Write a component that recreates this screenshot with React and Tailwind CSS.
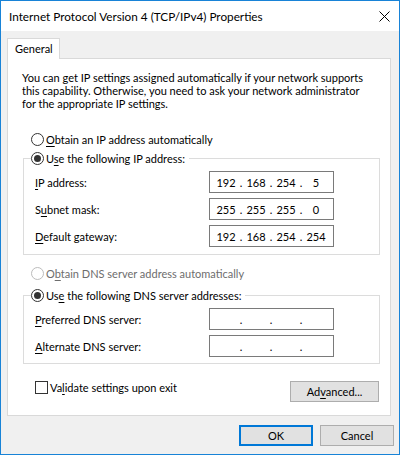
import React from 'react'

// Windows 10 style "Internet Protocol Version 4 (TCP/IPv4) Properties" dialog

function Radio({ checked, disabled }) {
    return (
        <span className={`flex items-center justify-center w-[13px] h-[13px] rounded-full border bg-white shrink-0 ${disabled ? 'border-[#bcbcbc]' : 'border-[#333333]'}`}>
            {checked && <span className="w-[7px] h-[7px] rounded-full bg-[#333333]" />}
        </span>
    )
}

// access-key underline helper
function Key({ children }) {
    return <span className="underline underline-offset-[2px]">{children}</span>
}

function IpBox({ octets }) {
    return (
        <div className="w-[125px] h-[22px] border border-[#7a7a7a] bg-white flex items-center pl-[4px]">
            {[0, 1, 2, 3].map(i => (
                <React.Fragment key={i}>
                    <span className="w-[24px] text-center">{octets ? octets[i] : ''}</span>
                    {i < 3 && <span className="w-[6px] text-center">.</span>}
                </React.Fragment>
            ))}
        </div>
    )
}

function FieldRow({ label, octets }) {
    return (
        <div className="flex items-center">
            <span className="w-[174px]">{label}</span>
            <IpBox octets={octets} />
        </div>
    )
}

function Button({ children, primary, className = '' }) {
    return (
        <button className={`h-[21px] bg-[#e1e1e1] flex items-center justify-center ${primary ? 'border-2 border-[#0078d7]' : 'border border-[#adadad]'} ${className}`}>
            {children}
        </button>
    )
}

export default function App() {
    return (
        <div className="w-[400px] h-[455px] border border-[#1883d7] bg-[#f0f0f0] flex flex-col text-[11px] leading-[13px] text-black font-['Lato',sans-serif]">
            {/* title bar */}
            <div className="h-[30px] bg-white flex items-center justify-between pl-[8px] pr-[9px] shrink-0">
                <span className="text-[11.75px]">Internet Protocol Version 4 (TCP/IPv4) Properties</span>
                <svg width="11" height="11" viewBox="0 0 11 11" className="mt-[1px]">
                    <path d="M0.5 0.5 L10.5 10.5 M10.5 0.5 L0.5 10.5" stroke="#000" strokeWidth="1" />
                </svg>
            </div>

            <div className="pl-[6px] pt-[7px] flex flex-col">
                {/* tab strip */}
                <div className="flex">
                    <div className="relative z-10 w-[53px] h-[21px] -mb-px bg-white border border-b-0 border-[#d9d9d9] flex items-center pl-[7px] pb-[1px]">
                        General
                    </div>
                </div>

                {/* tab page */}
                <div className="w-[384px] h-[358px] bg-white border border-[#d9d9d9] flex flex-col pt-[12px]">
                    <p className="pl-[14px]">
                        You can get IP settings assigned automatically if your network supports<br />
                        this capability. Otherwise, you need to ask your network administrator<br />
                        for the appropriate IP settings.
                    </p>

                    <div className="flex items-center gap-[2px] ml-[23px] mt-[22px] h-[14px]">
                        <Radio />
                        <span><Key>O</Key>btain an IP address automatically</span>
                    </div>

                    <fieldset className="ml-[15px] w-[357px] mt-[5px] border border-[#dcdcdc] px-[7px] pb-[7px]">
                        <legend className="flex items-center gap-[2px] pr-[4px] h-[15px]">
                            <Radio checked />
                            <span>U<Key>s</Key>e the following IP address:</span>
                        </legend>
                        <div className="flex flex-col gap-[5px] pl-[4px] mt-[5px]">
                            <FieldRow label={<><Key>I</Key>P address:</>} octets={['192', '168', '254', '5']} />
                            <FieldRow label={<>S<Key>u</Key>bnet mask:</>} octets={['255', '255', '255', '0']} />
                            <FieldRow label={<><Key>D</Key>efault gateway:</>} octets={['192', '168', '254', '254']} />
                        </div>
                    </fieldset>

                    <div className="flex items-center gap-[2px] ml-[23px] mt-[11px] h-[14px] text-[#6d6d6d]">
                        <Radio disabled />
                        <span>O<Key>b</Key>tain DNS server address automatically</span>
                    </div>

                    <fieldset className="ml-[15px] w-[357px] mt-[8px] border border-[#dcdcdc] px-[7px] pb-[6px]">
                        <legend className="flex items-center gap-[2px] pr-[4px] h-[15px]">
                            <Radio checked />
                            <span>Us<Key>e</Key> the following DNS server addresses:</span>
                        </legend>
                        <div className="flex flex-col gap-[5px] pl-[4px] mt-[5px]">
                            <FieldRow label={<><Key>P</Key>referred DNS server:</>} />
                            <FieldRow label={<><Key>A</Key>lternate DNS server:</>} />
                        </div>
                    </fieldset>

                    <div className="flex items-start justify-between ml-[27px] mr-[11px] mt-[17px]">
                        <div className="flex items-center gap-[2px] h-[13px]">
                            <span className="w-[13px] h-[13px] border border-[#333333] bg-white" />
                            <span>Va<Key>l</Key>idate settings upon exit</span>
                        </div>
                        <Button className="w-[89px]">Ad<Key>v</Key>anced...</Button>
                    </div>
                </div>

                {/* dialog buttons */}
                <div className="flex justify-end gap-[7px] mt-[9px] pr-[5px]">
                    <Button primary className="w-[74px]">OK</Button>
                    <Button className="w-[74px]">Cancel</Button>
                </div>
            </div>
        </div>
    )
}
